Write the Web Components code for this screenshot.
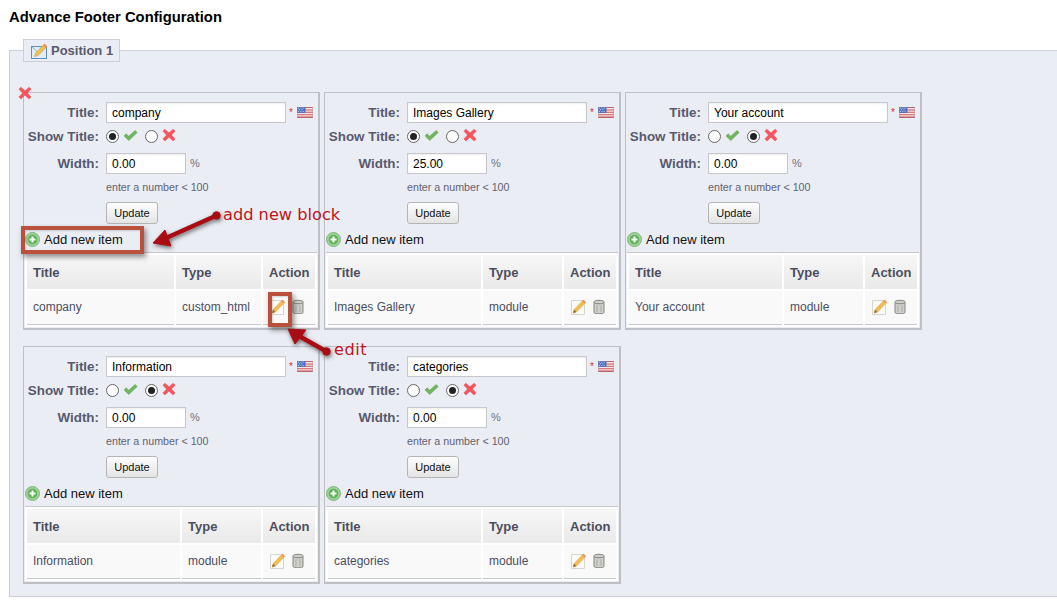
<!DOCTYPE html>
<html><head><meta charset="utf-8"><style>
html,body{margin:0;padding:0;background:#fff;}
body{font-family:"Liberation Sans",Arial,sans-serif;}
</style></head><body>

<footer-config>
  <config-position label="Position 1">
    <footer-block ftitle="company" show="yes" width="0.00" removable wide="1" row="company" rtype="custom_html"></footer-block>
    <footer-block ftitle="Images Gallery" show="yes" width="25.00" row="Images Gallery" rtype="module"></footer-block>
    <footer-block ftitle="Your account" show="no" width="0.00" row="Your account" rtype="module"></footer-block>
    <footer-block ftitle="Information" show="no" width="0.00" row="Information" rtype="module"></footer-block>
    <footer-block ftitle="categories" show="no" width="0.00" row="categories" rtype="module"></footer-block>
  </config-position>
  <help-overlay></help-overlay>
</footer-config>

<script>
const ICONS={
 cross:`<svg width="14" height="14" viewBox="0 0 16 16"><path d="M3.2 1.300 8 5.400l4.800-4.100 2.200 2.300L10.800 8l4.200 4.600-2.400 2.200L8 10.600l-4.600 4.200L1 12.500 5.200 8 1 3.600z" fill="#f4555e" stroke="#e8454e" stroke-width=".5"/></svg>`,
 check:`<svg width="15" height="11" viewBox="0 0 16 12"><path d="M1 6.500 3.200 4.200l2.900 2.700L13 .6l2.300 2.200-9.200 8.700z" fill="#72b562" stroke="#57a04c" stroke-width=".6"/></svg>`,
 flag:`<svg width="16" height="11" viewBox="0 0 17 12"><rect width="17" height="12" fill="#f3e6e6"/><path d="M0 0h17v1.200H0zM0 2.600h17v1.200H0zM0 5.200h17v1.200H0zM0 7.800h17v1.200H0zM0 10.400h17V12H0z" fill="#d0575a"/><rect width="9" height="6.400" fill="#4a6fc0"/><path d="M1 1.200h1M3.500 1.200h1M6 1.200h1M2 3h1M4.700 3h1M1 4.800h1M3.500 4.800h1M6 4.800h1" stroke="#e8eefc" stroke-width="1"/><rect x=".5" y=".5" width="16" height="11" fill="none" stroke="#8c7f95" stroke-width=".6" opacity=".6"/></svg>`,
 plus:`<svg width="15" height="15" viewBox="0 0 15 15"><circle cx="7.500" cy="7.500" r="7" fill="#9fd498" stroke="#6fa86b" stroke-width=".8"/><circle cx="7.500" cy="7.500" r="4.800" fill="#62b05d"/><path d="M7.500 4.500v6M4.500 7.500h6" stroke="#f4fbf3" stroke-width="2"/></svg>`,
 edit:`<svg width="16" height="16" viewBox="0 0 16 16"><path d="M.5 1.500h13v14H.5z" fill="#fbfaf4" stroke="#d6d6d0"/><path d="M3 10.800 12.300 1l2.500 2.300-9.400 9.800-3.200 1z" fill="#f2bd52" stroke="#d2963a" stroke-width=".5"/><path d="M12.300 1l2.500 2.300-1.200 1.300-2.500-2.300z" fill="#e9966a"/><path d="M3 10.800l2.400 2.300-3.200 1z" fill="#8a6a40"/></svg>`,
 trash:`<svg width="12" height="15" viewBox="0 0 12 15"><path d="M1 2.800C1 .8 11 .8 11 2.800V13c0 1.600-2 1.800-5 1.800S1 14.600 1 13z" fill="#cfcfcc" stroke="#85857f"/><path d="M1.500 4c1.500 1 7.500 1 9 0" fill="none" stroke="#85857f"/><path d="M4 6.500V13M8 6.500V13" stroke="#aaa9a4" stroke-width="1"/></svg>`,
 page:`<svg width="17" height="16" viewBox="0 0 17 16"><rect x=".5" y="3.500" width="15" height="12" fill="#e2ecf8" stroke="#5b8cc4"/><path d="M1 4l7 6 7-6" fill="none" stroke="#8fb3dc"/><path d="M4.500 10 13.500 1 16 3.400 7 12.600l-3.400 1z" fill="#f0c14f" stroke="#c7952f" stroke-width=".5"/><path d="M13.500 1 16 3.400 14.700 4.800 12.200 2.400z" fill="#e98a5a"/></svg>`
};
customElements.define('ui-icon',class extends HTMLElement{
 connectedCallback(){ if(this.shadowRoot)return; const r=this.attachShadow({mode:'open'});
  r.innerHTML=`<style>:host{display:inline-flex;flex:none;line-height:0}svg{display:block}</style>`+ICONS[this.getAttribute('name')];}
});
customElements.define('footer-config',class extends HTMLElement{
 constructor(){super();this.attachShadow({mode:'open'}).innerHTML=`<style>
 :host{display:block;position:relative;width:1057px;height:603px;overflow:hidden;font-family:"Liberation Sans",Arial,sans-serif}
 h1{margin:0;padding:9px 0 0 9px;font-size:14.800px;line-height:16px;font-weight:bold;color:#000}
 .w{padding:25px 0 0 9px}
 </style><h1>Advance Footer Configuration</h1><div class="w"><slot></slot></div>`;}
});
customElements.define('config-position',class extends HTMLElement{
 connectedCallback(){ if(this.shadowRoot)return; this.attachShadow({mode:'open'}).innerHTML=`<style>
 :host{display:block;width:1060px;height:547px;box-sizing:border-box;background:#ebedf4;border:1px solid #ccced8;padding:0 0 0 13px;border-right:none}
 .lg{display:inline-flex;align-items:center;gap:3px;height:23px;box-sizing:border-box;margin-top:-12px;vertical-align:top;background:#ebedf4;border:1px solid #ccced8;padding:0 6px 0 7px;font-size:13px;font-weight:bold;color:#585a6e}
 .g{display:flex;flex-wrap:wrap;width:915px;gap:16px 4px;margin-top:30px}
 </style><div style="height:11px"><div class="lg"><ui-icon name="page"></ui-icon>${this.getAttribute('label')}</div></div><div class="g"><slot></slot></div>`;}
});
customElements.define('footer-block',class extends HTMLElement{
 connectedCallback(){ if(this.shadowRoot)return;
 const a=n=>this.getAttribute(n); const yes=a('show')==='yes'; const wide=a('wide');
 this.attachShadow({mode:'open'}).innerHTML=`<style>
 :host{display:block;position:relative;width:297px;height:238px;box-sizing:border-box;border:1px solid #bfc0c6;border-width:1px 2px 2px 1px;font-size:12px;color:#585a6e}
 .x{position:absolute;left:-6px;top:-7px}
 .f{display:grid;grid-template-columns:75px 1fr;column-gap:7px;padding:8px 0 0 0}
 label{font-size:13.400px;font-weight:bold;text-align:right;align-self:center;color:#585a6e;white-space:nowrap}
 .in{display:flex;align-items:flex-end;height:22px}
 .in>.st,.in>ui-icon,.in>.pc{align-self:center}
 input[type=text]{box-sizing:border-box;height:21px;border:1px solid #c8c8cc;background:#fff;padding:0 5px;margin:0;font:12px "Liberation Sans",Arial,sans-serif;color:#000;outline:none;box-shadow:inset 0 1px 2px #eee}
 .t{width:180px}.w{width:80px}
 .st{color:#c33;font-size:10px;margin:0 4px 0 3px}
 .pc{margin-left:4px;font-size:11px;color:#707280}
 .rd{display:flex;align-items:center;height:22px}
 .r{box-sizing:border-box;width:13px;height:13px;border-radius:50%;border:1px solid #666;background:#fff;display:flex;align-items:center;justify-content:center;margin-right:4px}
 .r.on::after{content:"";width:7px;height:7px;border-radius:50%;background:#222}
 .rd ui-icon{margin:-2px 7px 0 0}
 .hint{grid-column:2;font-size:10.700px;line-height:14px;margin-top:6px;color:#606272}
 .btn{grid-column:2;justify-self:start;box-sizing:border-box;width:52px;height:22px;margin-top:8px;border:1px solid #b5b5b5;border-radius:3px;background:linear-gradient(#fdfdfd,#e4e4e4);font:11px "Liberation Sans",Arial,sans-serif;color:#111;text-align:center;line-height:20px}
 .add{display:flex;align-items:center;gap:4px;height:18px;margin:6px 0 4px 1px;font-size:13px;color:#111}
 table{border-collapse:separate;border-spacing:2px;table-layout:fixed;width:292px;margin-left:1px;background:#fff;border-top:1px solid #c8c8cc}
 th{height:34px;padding:0 6px;text-align:left;font-size:13px;font-weight:bold;color:#4c4e5e;background:linear-gradient(#f7f7f7,#e9e9e9)}
 td{height:31px;padding:0 6px 2px;font-size:12px;color:#4c4e62;background:#f9f9f9;border-bottom:1px solid #c8c8c8;white-space:nowrap}
 td.a{padding:0 0 2px 7px}.ai{display:flex;align-items:center;gap:6px}
 </style>
 ${a('removable')!==null?'<ui-icon class="x" name="cross"></ui-icon>':''}
 <div class="f">
  <label>Title:</label><div class="in"><input class="t" type="text" value="${a('ftitle')}"><span class="st">*</span><ui-icon name="flag"></ui-icon></div>
  <label style="margin-top:2px">Show Title:</label><div class="rd" style="margin-top:2px"><span class="r ${yes?'on':''}"></span><ui-icon name="check"></ui-icon><span class="r ${yes?'':'on'}"></span><ui-icon name="cross"></ui-icon></div>
  <label style="margin-top:5px">Width:</label><div class="in" style="margin-top:5px"><input class="w" type="text" value="${a('width')}"><span class="pc">%</span></div>
  <div class="hint">enter a number &lt; 100</div>
  <div class="btn">Update</div>
 </div>
 <div class="add"><ui-icon name="plus"></ui-icon>Add new item</div>
 <table><colgroup><col style="width:${wide?147:153}px"><col style="width:${wide?85:79}px"><col style="width:52px"></colgroup>
 <tr><th>Title</th><th>Type</th><th>Action</th></tr>
 <tr><td>${a('row')}</td><td>${a('rtype')}</td><td class="a"><div class="ai"><ui-icon name="edit"></ui-icon><ui-icon name="trash"></ui-icon></div></td></tr>
 </table>`;}
});
customElements.define('help-overlay',class extends HTMLElement{
 constructor(){super();this.attachShadow({mode:'open'}).innerHTML=`<style>
 :host{position:absolute;inset:0;pointer-events:none}
 svg{position:absolute;left:0;top:0}
 .l{position:absolute;font:16.200px "DejaVu Sans",sans-serif;color:#c0141c;white-space:nowrap;line-height:18px}
 .b{position:absolute;box-sizing:border-box;border:4px solid #b9513d;box-shadow:2px 3px 5px rgba(50,50,50,.55),inset 1px 1px 2px rgba(60,60,60,.2)}
 </style>
 <div class="b" style="left:21px;top:226px;width:123px;height:28px"></div>
 <div class="b" style="left:268px;top:292px;width:24px;height:35px"></div>
 <svg width="1057" height="603"><defs><filter id="s" x="-30%" y="-30%" width="160%" height="160%"><feDropShadow dx="1" dy="2" stdDeviation="2" flood-color="#333" flood-opacity=".7"/></filter></defs>
 <g filter="url(#s)" fill="#a80f15" stroke="#a80f15"><path d="M216.500 215.500 166 238" stroke-width="4.500" fill="none"/><circle cx="216.500" cy="215.500" r="3.800"/><path d="M153 243 165 230 171 246z" stroke-width="1"/>
 <path d="M326.500 351.500 299 336" stroke-width="4.500" fill="none"/><circle cx="326.500" cy="351.500" r="3.800"/><path d="M288 329 306 330 295 344z" stroke-width="1"/></g></svg>
 <span class="l" style="left:223px;top:206px">add new block</span>
 <span class="l" style="left:334px;top:341px;letter-spacing:.5px">edit</span>`;}
});
</script>
</body></html>
